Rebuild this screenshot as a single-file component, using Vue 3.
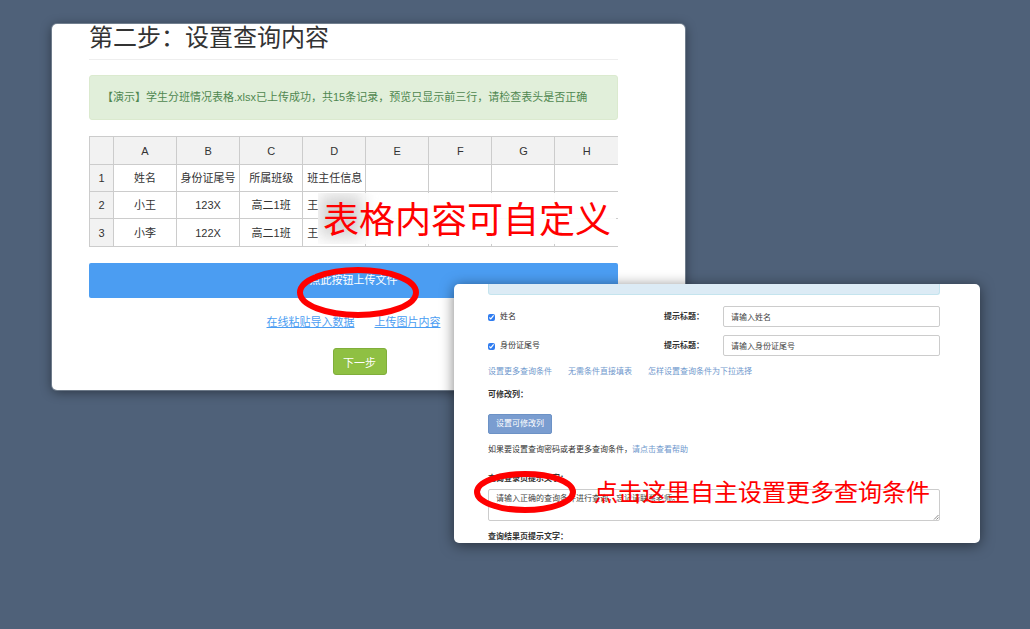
<script setup>
import { ref } from 'vue'

const columns = ['A', 'B', 'C', 'D', 'E', 'F', 'G', 'H']
const rows = [
  ['姓名', '身份证尾号', '所属班级', '班主任信息', '', '', '', ''],
  ['小王', '123X', '高二1班', '王', '', '', '', ''],
  ['小李', '122X', '高二1班', '王', '', '', '', ''],
]
const fields = ref([
  { id: 'name', label: '姓名', on: true, hint: '请输入姓名' },
  { id: 'idno', label: '身份证尾号', on: true, hint: '请输入身份证尾号' },
])
const loginHint = ref('请输入正确的查询条件进行查询，忘记请联系老师。')
</script>

<template>
  <main class="stage">
    <section class="window upload">
      <h1>第二步：设置查询内容</h1>
      <p class="success">【演示】学生分班情况表格.xlsx已上传成功，共15条记录，预览只显示前三行，请检查表头是否正确</p>
      <div class="sheet">
        <table>
          <thead>
            <tr>
              <th class="corner"></th>
              <th v-for="c in columns" :key="c">{{ c }}</th>
            </tr>
          </thead>
          <tbody>
            <tr v-for="(r, i) in rows" :key="i">
              <th>{{ i + 1 }}</th>
              <td v-for="(cell, j) in r" :key="j" :class="{ start: j === 3 }">{{ cell }}</td>
            </tr>
          </tbody>
        </table>
        <div class="callout-table"><span class="smudge"></span><span class="callout-text">表格内容可自定义</span></div>
      </div>
      <div class="upload-row">
        <button type="button" class="upload-btn">点此按钮上传文件</button>
        <svg class="ring ring-upload" viewBox="0 0 122 51" aria-hidden="true">
          <ellipse cx="61" cy="25.500" rx="58" ry="22.500" />
        </svg>
      </div>
      <nav class="imports">
        <a href="#paste">在线粘贴导入数据</a>
        <a href="#image">上传图片内容</a>
      </nav>
      <div class="actions">
        <button type="button" class="next">下一步</button>
      </div>
    </section>

    <section class="window settings">
      <div class="info"></div>
      <div v-for="f in fields" :key="f.id" class="field">
        <label class="check"><input v-model="f.on" type="checkbox" />{{ f.label }}</label>
        <label class="hint-label" :for="f.id">提示标题：</label>
        <input :id="f.id" v-model="f.hint" class="text" type="text" />
      </div>
      <nav class="more">
        <a href="#more">设置更多查询条件</a>
        <a href="#none">无需条件直接填表</a>
        <a href="#select">怎样设置查询条件为下拉选择</a>
      </nav>
      <h2>可修改列：</h2>
      <button type="button" class="editable">设置可修改列</button>
      <p class="help">如果要设置查询密码或者更多查询条件，<a href="#help">请点击查看帮助</a></p>
      <div class="login">
        <label for="login-hint">查询登录页提示文字：</label>
        <div class="area">
          <textarea id="login-hint" v-model="loginHint"></textarea>
          <svg class="grip" viewBox="0 0 6 6" aria-hidden="true"><path d="M1 5.500 5.500 1M3.500 5.500l2-2" /></svg>
        </div>
        <svg class="ring ring-login" viewBox="0 0 102 42" aria-hidden="true">
          <ellipse cx="51" cy="21" rx="48" ry="18" />
        </svg>
        <span class="callout-login">点击这里自主设置更多查询条件</span>
      </div>
      <h2 class="result">查询结果页提示文字：</h2>
    </section>
  </main>
</template>

<style>
body {
  margin: 0;
  background: #4f6179;
}
</style>

<style scoped>
.stage {
  box-sizing: border-box;
  display: grid;
  grid-template-columns: 52fr 402fr 231fr 295fr 50fr;
  align-items: start;
  min-height: 100vh;
  font-family: "Liberation Sans", "Noto Sans CJK SC", sans-serif;
  font-size: 11px;
  color: #333;
}
.stage * {
  box-sizing: border-box;
}
h1, h2, p {
  margin: 0;
  font-weight: 400;
}
button, input, textarea {
  font: inherit;
}
.window {
  grid-row: 1;
  background: #fff;
  border-radius: 5px;
}
.upload {
  grid-column: 2 / 4;
  margin-top: 24px;
  padding: 0 67px 15px 37px;
  box-shadow: 0 0 0 1px rgba(160, 172, 184, 0.5), 0 2px 12px rgba(0, 0, 0, 0.45);
}
.settings {
  z-index: 1;
  grid-column: 3 / 5;
  margin-top: 284px;
  padding: 0 40px 0 34px;
  font-size: 8px;
  line-height: 12px;
  box-shadow: 0 2px 14px rgba(0, 0, 0, 0.5);
}
h1 {
  padding-bottom: 7px;
  border-bottom: 1px solid #eee;
  font-size: 24px;
  line-height: 28px;
}
.success {
  margin: 15px 0 16px;
  padding: 14px 12px;
  border: 1px solid #dbeacf;
  border-radius: 3px;
  background: #e1efda;
  color: #4f8750;
  line-height: 15px;
  white-space: nowrap;
}
.sheet {
  position: relative;
}
table {
  width: 100%;
  table-layout: fixed;
  border-collapse: collapse;
  line-height: 16px;
}
th, td {
  height: 27px;
  padding: 0;
  border: 1px solid #ccc;
  text-align: center;
  font-weight: 400;
  white-space: nowrap;
}
thead th, tbody tr:last-child td {
  height: 28px;
}
th {
  background: #f2f2f2;
}
th:last-child, td:last-child {
  border-right: 0;
}
.corner {
  width: 24px;
}
.start {
  padding-left: 4px;
  text-align: left;
}
.callout-table {
  position: absolute;
  left: 229px;
  right: 2px;
  bottom: 3px;
  height: 51px;
  overflow: hidden;
  background: rgba(255, 255, 255, 0.93);
  color: #f00;
  font-size: 36px;
  line-height: 55px;
  white-space: nowrap;
}
.smudge {
  position: absolute;
  left: 2px;
  top: 2px;
  width: 42px;
  height: 42px;
  background: #d2d2d2;
  filter: blur(8px);
}
.callout-text {
  position: relative;
  padding-left: 5px;
}
.upload-row {
  position: relative;
  margin-top: 16px;
}
.upload-btn {
  display: block;
  width: 100%;
  height: 35px;
  padding: 0 0 3px;
  border: 0;
  border-radius: 2px;
  background: #4b9df2;
  color: #fff;
}
.ring {
  position: absolute;
  fill: none;
  stroke: #f00;
  stroke-width: 6px;
}
.ring-upload {
  left: 208px;
  top: 4px;
  width: 122px;
  height: 51px;
}
.imports {
  display: flex;
  justify-content: center;
  gap: 20px;
  margin-top: 16px;
  line-height: 16px;
}
.imports a {
  color: #4b9df2;
  text-decoration: underline;
}
.actions {
  display: flex;
  justify-content: center;
  padding: 18px 0 0 12px;
}
.next {
  width: 54px;
  height: 27px;
  padding: 0;
  border: 1px solid #80ae3b;
  border-radius: 3px;
  background: #8fc043;
  color: #fff;
}
.info {
  height: 11px;
  margin-bottom: 11px;
  border: 1px solid #c4e4ee;
  border-top: 0;
  border-radius: 0 0 3px 3px;
  background: #dcebf5;
}
.field {
  display: grid;
  grid-template-columns: 176fr 59fr 217fr;
  align-items: center;
  margin-bottom: 8px;
}
.check {
  display: flex;
  align-items: center;
  gap: 5px;
}
.check, .hint-label {
  padding-top: 1px;
}
.check input {
  width: 7px;
  height: 7px;
  margin: 0;
  accent-color: #2f7cf0;
}
.hint-label, .login label, h2 {
  font-size: 8px;
  font-weight: 700;
}
.text {
  width: 100%;
  height: 21px;
  padding: 0 7px 1px;
  border: 1px solid #ccc;
  border-radius: 2px;
  color: #444;
}
.more {
  display: flex;
  gap: 16px;
  margin: 10px 0 11px;
}
a {
  color: #6f98cd;
  text-decoration: none;
}
.editable {
  display: block;
  height: 20px;
  margin: 13px 0 10px;
  padding: 0 7px;
  border: 1px solid #6c92c6;
  border-radius: 2px;
  background: #7a9dd0;
  color: #fff;
}
.login {
  position: relative;
  margin-top: 17px;
}
.login label {
  display: block;
  margin-bottom: 4px;
}
.area {
  position: relative;
}
.area textarea {
  display: block;
  width: 100%;
  height: 32px;
  margin-bottom: 10px;
  padding: 3px 7px;
  border: 1px solid #ccc;
  border-radius: 2px;
  color: #444;
  resize: none;
}
.grip {
  position: absolute;
  right: 1px;
  bottom: 1px;
  width: 6px;
  height: 6px;
  fill: none;
  stroke: #888;
  stroke-width: 1px;
}
.ring-login {
  left: -14px;
  top: -2px;
  width: 102px;
  height: 42px;
}
.callout-login {
  position: absolute;
  left: 106px;
  top: 2px;
  color: #f00;
  font-size: 24px;
  line-height: 36px;
  white-space: nowrap;
}
.result {
  height: 12px;
}
</style>
